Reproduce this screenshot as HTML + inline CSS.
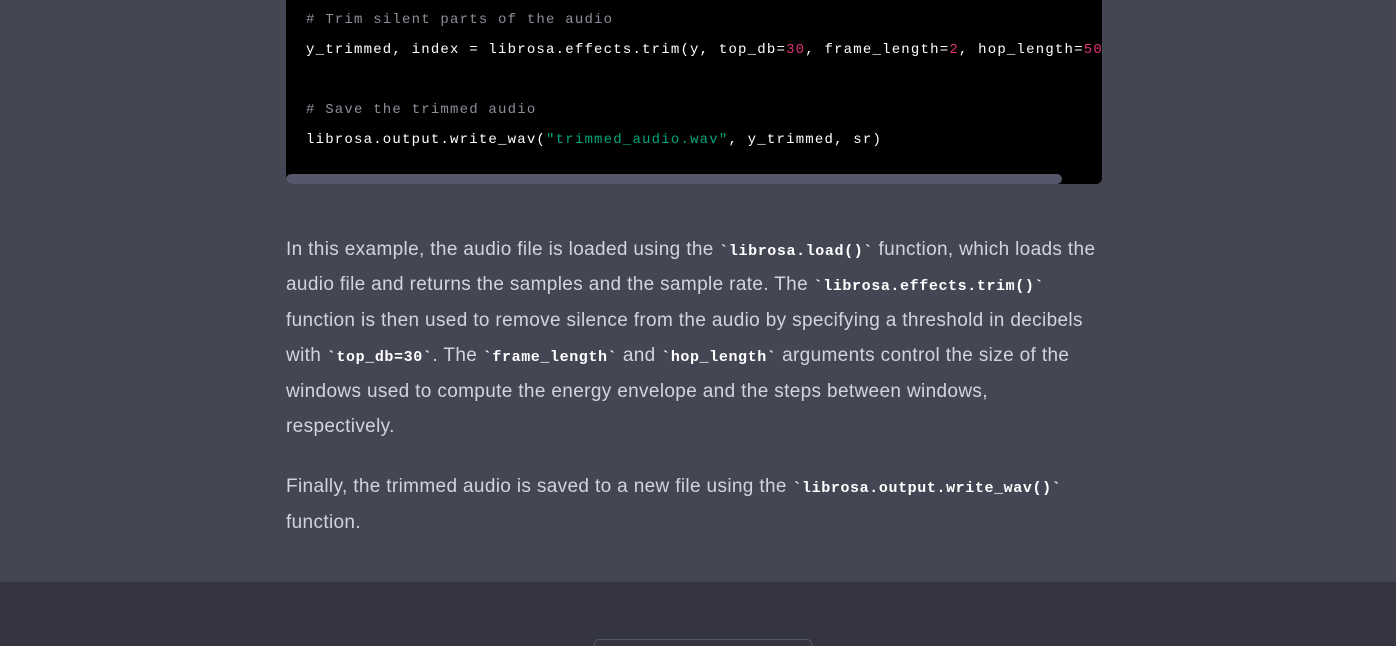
<!DOCTYPE html>
<html><head><style>
html,body{margin:0;width:1396px;height:646px;overflow:hidden}
body{background:#444654;font-family:"Liberation Sans",sans-serif;position:relative}
.code{position:absolute;left:286px;top:-10px;width:816px;height:194px;background:#000;border-radius:0 0 6px 6px;overflow:hidden}
.code pre{margin:0;position:absolute;left:20px;top:15px;font-family:"Liberation Mono",monospace;font-size:14px;letter-spacing:1.2px;line-height:30px;color:#fff;white-space:pre}
.c{color:#8e8e9a}.n{color:#df3079}.s{color:#00a67d}
.sb{position:absolute;left:0;top:184px;width:776px;height:10px;background:#55576a;border-radius:5px}
.prose{position:absolute;left:286px;top:232px;width:900px;color:#d1d5db;font-size:19px;letter-spacing:0.35px;line-height:35.4px;white-space:nowrap}
.prose p{margin:0 0 25px}
code{font-family:"Liberation Mono",monospace;font-weight:bold;color:#fff;font-size:15px;letter-spacing:0.6px;line-height:1}
.foot{position:absolute;left:0;top:582px;width:1396px;height:64px;background:#343541;overflow:hidden}
.btn{position:absolute;left:594px;top:57px;width:216px;height:20px;border:1px solid #565869;border-radius:5px}
</style></head><body>
<div class="code"><pre><span class="c"># Trim silent parts of the audio</span>
y_trimmed, index = librosa.effects.trim(y, top_db=<span class="n">30</span>, frame_length=<span class="n">2</span>, hop_length=<span class="n">500</span>)

<span class="c"># Save the trimmed audio</span>
librosa.output.write_wav(<span class="s">"trimmed_audio.wav"</span>, y_trimmed, sr)</pre><div class="sb"></div></div>
<div class="prose">
<p>In this example, the audio file is loaded using the <code>`librosa.load()`</code> function, which loads the<br>audio file and returns the samples and the sample rate. The <code>`librosa.effects.trim()`</code><br>function is then used to remove silence from the audio by specifying a threshold in decibels<br>with <code>`top_db=30`</code>. The <code>`frame_length`</code> and <code>`hop_length`</code> arguments control the size of the<br>windows used to compute the energy envelope and the steps between windows,<br>respectively.</p>
<p>Finally, the trimmed audio is saved to a new file using the <code>`librosa.output.write_wav()`</code><br>function.</p>
</div>
<div class="foot"><div class="btn"></div></div>
</body></html>
